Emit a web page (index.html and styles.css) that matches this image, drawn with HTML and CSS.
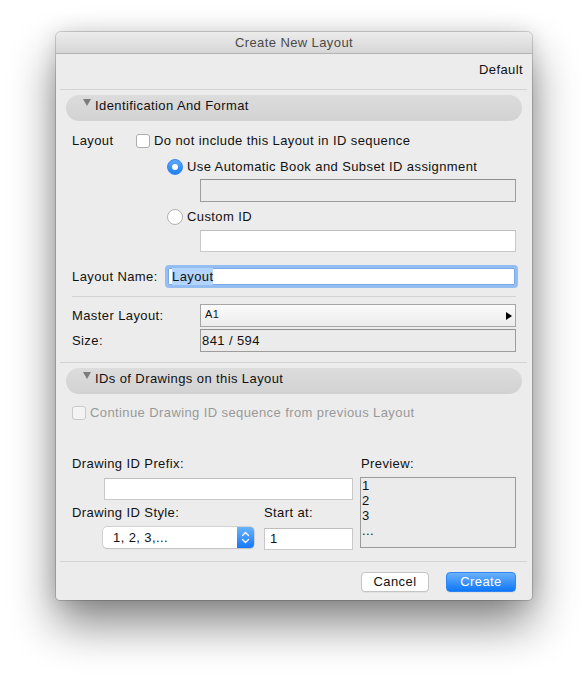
FILE: index.html
```html
<!DOCTYPE html>
<html>
<head>
<meta charset="utf-8">
<link rel="stylesheet" href="styles.css">
</head>
<body>
<div class="window">
  <div class="titlebar">Create New Layout</div>
  <div class="default-row">Default</div>
  <div class="sep wide s1"></div>
  <div class="pill p1"><span class="tri"></span><span>Identification And Format</span></div>

  <div class="row r-layout"><span class="lbl w64">Layout</span><span class="check"></span><span>Do not include this Layout in ID sequence</span></div>
  <div class="row r-radio1"><span class="radio on"><span class="dot"></span></span><span>Use Automatic Book and Subset ID assignment</span></div>
  <div class="field gray b1"></div>
  <div class="row r-radio2"><span class="radio"></span><span>Custom ID</span></div>
  <div class="field white b2"></div>

  <div class="row r-name"><span class="lbl w93">Layout Name:</span><div class="focus"><span class="sel">Layout</span></div></div>
  <div class="sep inner s2"></div>

  <div class="row r-master"><span class="lbl w128">Master Layout:</span><div class="popup"><span class="a1">A1</span><span class="rarrow"></span></div></div>
  <div class="row r-size"><span class="lbl w128">Size:</span><div class="field gray sizebox">841 / 594</div></div>
  <div class="sep wide s3"></div>

  <div class="pill p2"><span class="tri"></span><span>IDs of Drawings on this Layout</span></div>
  <div class="row r-cont"><span class="check dis"></span><span>Continue Drawing ID sequence from previous Layout</span></div>

  <div class="lower">
    <div class="lcol">
      <div class="row lrow">Drawing ID Prefix:</div>
      <div class="field white prefix"></div>
      <div class="row labels2"><span class="w192">Drawing ID Style:</span><span>Start at:</span></div>
      <div class="ctrls">
        <div class="select"><span class="seltext">1, 2, 3,...</span><span class="stepper"><svg width="17" height="21" viewBox="0 0 17 21"><path d="M5.5 8.5 L8.5 5.5 L11.5 8.5 M5.5 12.5 L8.5 15.5 L11.5 12.5" fill="none" stroke="#fff" stroke-width="1.3" stroke-linecap="round" stroke-linejoin="round"/></svg></span></div>
        <div class="field white startat">1</div>
      </div>
    </div>
    <div class="rcol">
      <div class="row lrow prevlbl">Preview:</div>
      <div class="preview">1<br>2<br>3<br>...</div>
    </div>
  </div>

  <div class="sep wide s4"></div>
  <div class="buttons"><div class="btn">Cancel</div><div class="btn primary">Create</div></div>
</div>
</body>
</html>
```

FILE: styles.css
```css
html, body {
  margin: 0;
  padding: 0;
  background: #ffffff;
}
body {
  box-sizing: border-box;
  min-height: 680px;
  padding: 32px 0 0 56px;
  font-family: "Liberation Sans", Arial, Helvetica, sans-serif;
  font-size: 13px;
  letter-spacing: 0.4px;
  color: #111;
}
.window {
  width: 476px;
  height: 568px;
  box-sizing: border-box;
  background: #ececec;
  border-radius: 5px 5px 4px 4px;
  overflow: hidden;
  box-shadow: 0 0 0 1px rgba(0,0,0,0.16), 0 0 20px rgba(0,0,0,0.12), 0 24px 46px rgba(0,0,0,0.48);
}
.titlebar {
  height: 21px;
  line-height: 21px;
  text-align: center;
  color: #4a4a4a;
  background: linear-gradient(#ececec, #d6d6d6);
  border-bottom: 1px solid #b3b3b3;
}
.default-row {
  margin-top: 8px;
  height: 16px;
  line-height: 16px;
  text-align: right;
  padding-right: 9px;
}
.sep {
  height: 1px;
  background: #d3d3d3;
}
.sep.wide { margin-left: 4px; margin-right: 5px; }
.sep.inner { margin-left: 16px; width: 444px; }
.s1 { margin-top: 11px; }
.s2 { margin-top: 8px; }
.s3 { margin-top: 10px; }
.s4 { margin-top: 11px; }

.pill {
  height: 26px;
  box-sizing: border-box;
  margin: 0 10px;
  border-radius: 13px;
  background: linear-gradient(#dcdcdc, #d2d2d2);
  display: flex;
  align-items: flex-start;
  padding: 3px 0 0 17px;
  line-height: 16px;
  color: #111;
}
.p1 { margin-top: 5px; }
.p2 { margin-top: 5px; }
.tri {
  width: 0;
  height: 0;
  border-left: 4px solid transparent;
  border-right: 4px solid transparent;
  border-top: 7px solid #7c7c7c;
  margin: 1px 4px 0 0;
}

.row {
  display: flex;
  align-items: center;
  height: 16px;
  line-height: 16px;
}
.lbl { flex: none; }
.w64 { width: 64px; }
.w93 { width: 93px; }
.w128 { width: 128px; }
.w192 { width: 192px; }

.r-layout { margin-top: 12px; padding-left: 16px; }
.check {
  width: 14px;
  height: 14px;
  box-sizing: border-box;
  background: #fff;
  border: 1px solid #acacac;
  border-radius: 3px;
  margin-right: 4px;
  flex: none;
}
.check.dis { border-color: #c9c9c9; background: #f3f3f3; }

.r-radio1 { margin-top: 10px; padding-left: 111px; }
.r-radio2 { margin-top: 7px; padding-left: 111px; }
.radio {
  width: 16px;
  height: 16px;
  box-sizing: border-box;
  border-radius: 50%;
  background: #fff;
  border: 1px solid #b2b2b2;
  margin-right: 4px;
  flex: none;
  display: flex;
  align-items: center;
  justify-content: center;
}
.radio.on {
  border: 1px solid #2f86f2;
  background: linear-gradient(#5eaafc, #1f7ff5);
}
.dot {
  width: 6px;
  height: 6px;
  border-radius: 50%;
  background: #fff;
}

.field {
  box-sizing: border-box;
  border: 1px solid #a4a4a4;
}
.field.gray {
  background: #ebebeb;
  border-color: #9d9d9d;
  border-top-color: #8f8f8f;
}
.field.white {
  background: #fff;
  border-color: #c9c9c9;
  border-top-color: #bdbdbd;
}
.b1 { margin: 4px 0 0 144px; width: 316px; height: 23px; }
.b2 { margin: 5px 0 0 144px; width: 316px; height: 22px; }

.r-name { margin-top: 13px; padding-left: 16px; height: 23px; }
.focus {
  width: 353px;
  height: 23px;
  box-sizing: border-box;
  border: 3px solid #94bdf2;
  border-radius: 4px;
  background: #fff;
  padding-left: 4px;
  display: flex;
  align-items: center;
  box-shadow: inset 0 0 0 1px #7aa8e8;
}
.sel {
  background: #b3d4fd;
  line-height: 17px;
}

.r-master { margin-top: 7px; padding-left: 16px; height: 23px; }
.popup {
  width: 316px;
  height: 23px;
  box-sizing: border-box;
  border: 1px solid #a6a6a6;
  background: linear-gradient(#fbfbfb, #ececec);
  display: flex;
  align-items: center;
  justify-content: space-between;
  padding: 0 3px 0 4px;
}
.a1 { font-size: 11px; line-height: 14px; margin-top: -4px; letter-spacing: 0.3px; }
.rarrow {
  width: 0;
  height: 0;
  border-top: 4px solid transparent;
  border-bottom: 4px solid transparent;
  border-left: 6px solid #000;
}
.r-size { margin-top: 2px; padding-left: 16px; height: 23px; }
.sizebox {
  width: 316px;
  height: 23px;
  line-height: 21px;
  padding-left: 1px;
  background: #ececec;
}

.r-cont { margin-top: 11px; padding-left: 16px; color: #999; }

.lower {
  display: flex;
  margin-top: 35px;
  padding-left: 16px;
}
.lcol { width: 281px; }
.rcol { width: 156px; margin-left: 7px; }
.prefix { margin: 6px 0 0 32px; width: 249px; height: 22px; }
.labels2 { margin-top: 5px; }
.ctrls {
  display: flex;
  align-items: flex-start;
  margin-top: 6px;
}
.select {
  margin-left: 31px;
  width: 151px;
  height: 21px;
  box-sizing: border-box;
  background: #fff;
  border-radius: 4px;
  box-shadow: 0 0 0 0.5px #b5b5b5, 0 1px 1px rgba(0,0,0,0.12);
  display: flex;
  align-items: center;
  justify-content: space-between;
  overflow: hidden;
}
.seltext { padding-left: 10px; line-height: 16px; }
.stepper {
  width: 17px;
  height: 21px;
  background: linear-gradient(#6ab3fb, #1678f7);
  display: block;
}
.stepper svg { display: block; }
.startat {
  margin-left: 10px;
  width: 89px;
  height: 22px;
  line-height: 20px;
  padding-left: 5px;
  margin-top: 1px;
  border-color: #b0b0b0;
}
.prevlbl { padding-left: 1px; }
.preview {
  margin-top: 5px;
  width: 156px;
  height: 71px;
  box-sizing: border-box;
  background: #ebebeb;
  border: 1px solid #9a9a9a;
  padding-left: 1px;
  line-height: 15px;
}

.buttons {
  display: flex;
  justify-content: flex-end;
  margin-top: 10px;
  padding-right: 16px;
}
.btn {
  height: 20px;
  box-sizing: border-box;
  width: 68px;
  line-height: 18px;
  text-align: center;
  background: #fff;
  border: 1px solid #c4c4c4;
  border-radius: 4px;
  box-shadow: 0 0.5px 0.5px rgba(0,0,0,0.08);
}
.btn.primary {
  width: 70px;
  margin-left: 17px;
  color: #fff;
  border-color: #2f85f6;
  background: linear-gradient(#69b1fb, #0e77f8);
}
```
